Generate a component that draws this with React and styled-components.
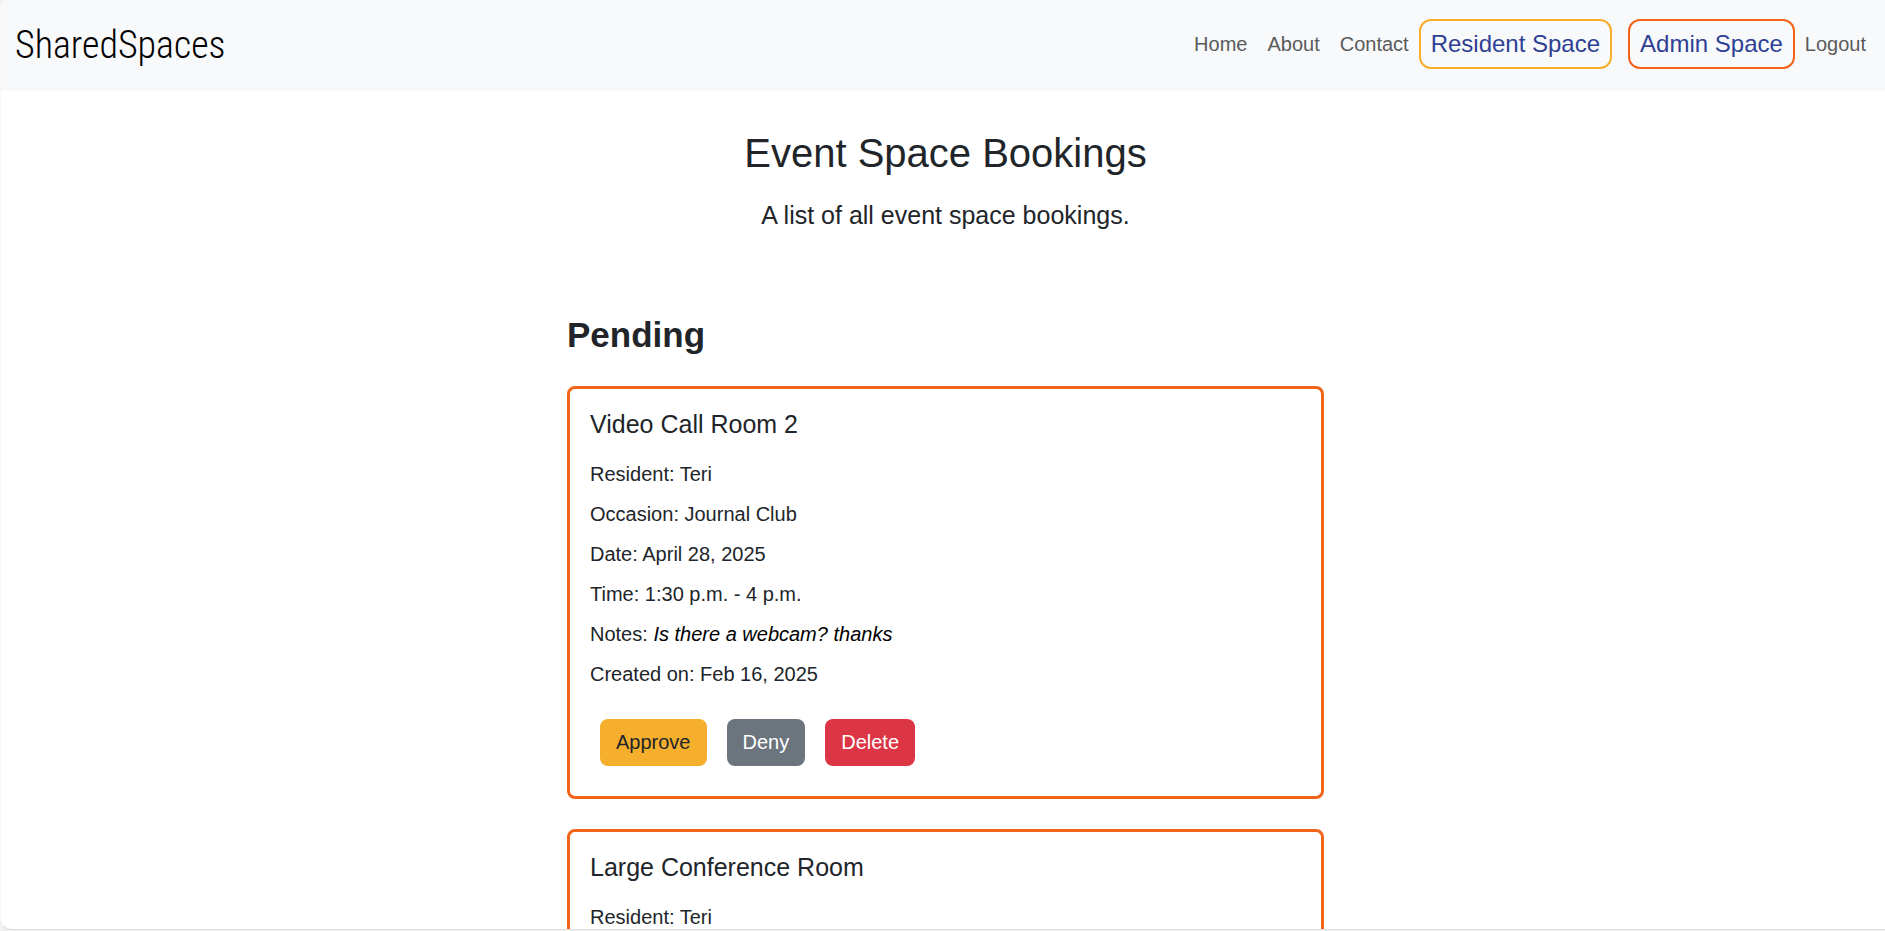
import React from "react";
import styled, { createGlobalStyle } from "styled-components";

const GlobalStyle = createGlobalStyle`
  * { box-sizing: border-box; }
  body {
    margin: 0;
    background: #f1f1f1;
    color: #212529;
    font: 20px/30px "Liberation Sans", Arial, sans-serif;
  }
  h1, h2, h3, p { margin: 0; }
`;

const Shell = styled.div`
  height: calc(100vh - 1px);
  overflow: hidden;
  background: #fff;
  border-left: 1px solid #f8f8f8;
  border-bottom: 1px solid #dcdcdc;
  border-radius: 8px 0 0 12px;
`;

const Navbar = styled.header`
  display: flex;
  justify-content: space-between;
  align-items: center;
  padding: 19px 9px 20px 14px;
  background: #f8f9fb;
`;

const Brand = styled.a`
  color: #000;
  font: 300 38px/52px "Roboto Condensed", Roboto, sans-serif;
  text-decoration: none;
`;

const NavLinks = styled.nav`
  display: flex;
  align-items: center;
  align-self: flex-start;
`;

const NavLink = styled.a`
  padding: 10px;
  color: #5a5b5c;
  text-decoration: none;
`;

const SpaceLink = styled.a`
  padding: 0 10px;
  border: 2px solid ${(p) => p.$color};
  border-radius: 12px;
  color: #2e3f94;
  font-size: 24px;
  line-height: 46px;
  text-decoration: none;

  & + & { margin-left: 16px; }
`;

const Main = styled.main`
  display: flex;
  flex-direction: column;
  align-items: center;
  padding: 38px 0 30px 5px;
`;

const Title = styled.h1`
  font-size: 40px;
  font-weight: 400;
  line-height: 48px;
`;

const Lead = styled.p`
  margin-top: 19px;
  font-size: 25px;
  line-height: 38px;
`;

const Bookings = styled.section`
  display: flex;
  flex-direction: column;
  gap: 30px;
  width: 100%;
  max-width: 757px;
  margin-top: 80px;
`;

const StatusHeading = styled.h2`
  font-size: 35px;
  font-weight: 700;
  line-height: 42px;
`;

const Card = styled.article`
  padding: 20px 20px 30px;
  border: 3px solid #f26419;
  border-radius: 8px;
`;

const CardTitle = styled.h3`
  margin-bottom: 20px;
  font-size: 25px;
  font-weight: 400;
  line-height: 30px;
`;

const Details = styled.div`
  display: flex;
  flex-direction: column;
  gap: 10px;
`;

const Notes = styled.em`
  color: #000;
`;

const Actions = styled.div`
  display: flex;
  gap: 20px;
  margin: 30px 0 0 10px;
`;

const tones = {
  warning: ["#f6ae2d", "#212529"],
  secondary: ["#6c757d", "#fff"],
  danger: ["#dc3545", "#fff"],
};

const Button = styled.button`
  padding: 8px 16px;
  border: 0;
  border-radius: 8px;
  background: ${(p) => tones[p.$tone][0]};
  color: ${(p) => tones[p.$tone][1]};
  font: inherit;
  line-height: 31px;
  cursor: pointer;
`;

const actions = {
  approve: { label: "Approve", tone: "warning" },
  deny: { label: "Deny", tone: "secondary" },
  remove: { label: "Delete", tone: "danger" },
};

const bookings = [
  {
    room: "Video Call Room 2",
    details: [
      ["Resident", "Teri"],
      ["Occasion", "Journal Club"],
      ["Date", "April 28, 2025"],
      ["Time", "1:30 p.m. - 4 p.m."],
      ["Notes", "Is there a webcam? thanks"],
      ["Created on", "Feb 16, 2025"],
    ],
    actions: ["approve", "deny", "remove"],
  },
  { room: "Large Conference Room", details: [["Resident", "Teri"]], actions: [] },
];

function BookingCard({ booking }) {
  return (
    <Card>
      <CardTitle>{booking.room}</CardTitle>
      <Details>
        {booking.details.map(([label, value]) => (
          <p key={label}>
            {label}: {label === "Notes" ? <Notes>{value}</Notes> : value}
          </p>
        ))}
      </Details>
      {booking.actions.length > 0 && (
        <Actions>
          {booking.actions.map((name) => (
            <Button key={name} type="button" $tone={actions[name].tone}>
              {actions[name].label}
            </Button>
          ))}
        </Actions>
      )}
    </Card>
  );
}

export default function App() {
  return (
    <>
      <GlobalStyle />
      <Shell>
        <Navbar>
          <Brand href="#">SharedSpaces</Brand>
          <NavLinks>
            <NavLink href="#">Home</NavLink>
            <NavLink href="#">About</NavLink>
            <NavLink href="#">Contact</NavLink>
            <SpaceLink href="#" $color="#f6ae2d">Resident Space</SpaceLink>
            <SpaceLink href="#" $color="#f26419">Admin Space</SpaceLink>
            <NavLink href="#">Logout</NavLink>
          </NavLinks>
        </Navbar>
        <Main>
          <Title>Event Space Bookings</Title>
          <Lead>A list of all event space bookings.</Lead>
          <Bookings>
            <StatusHeading>Pending</StatusHeading>
            {bookings.map((b) => <BookingCard key={b.room} booking={b} />)}
          </Bookings>
        </Main>
      </Shell>
    </>
  );
}
